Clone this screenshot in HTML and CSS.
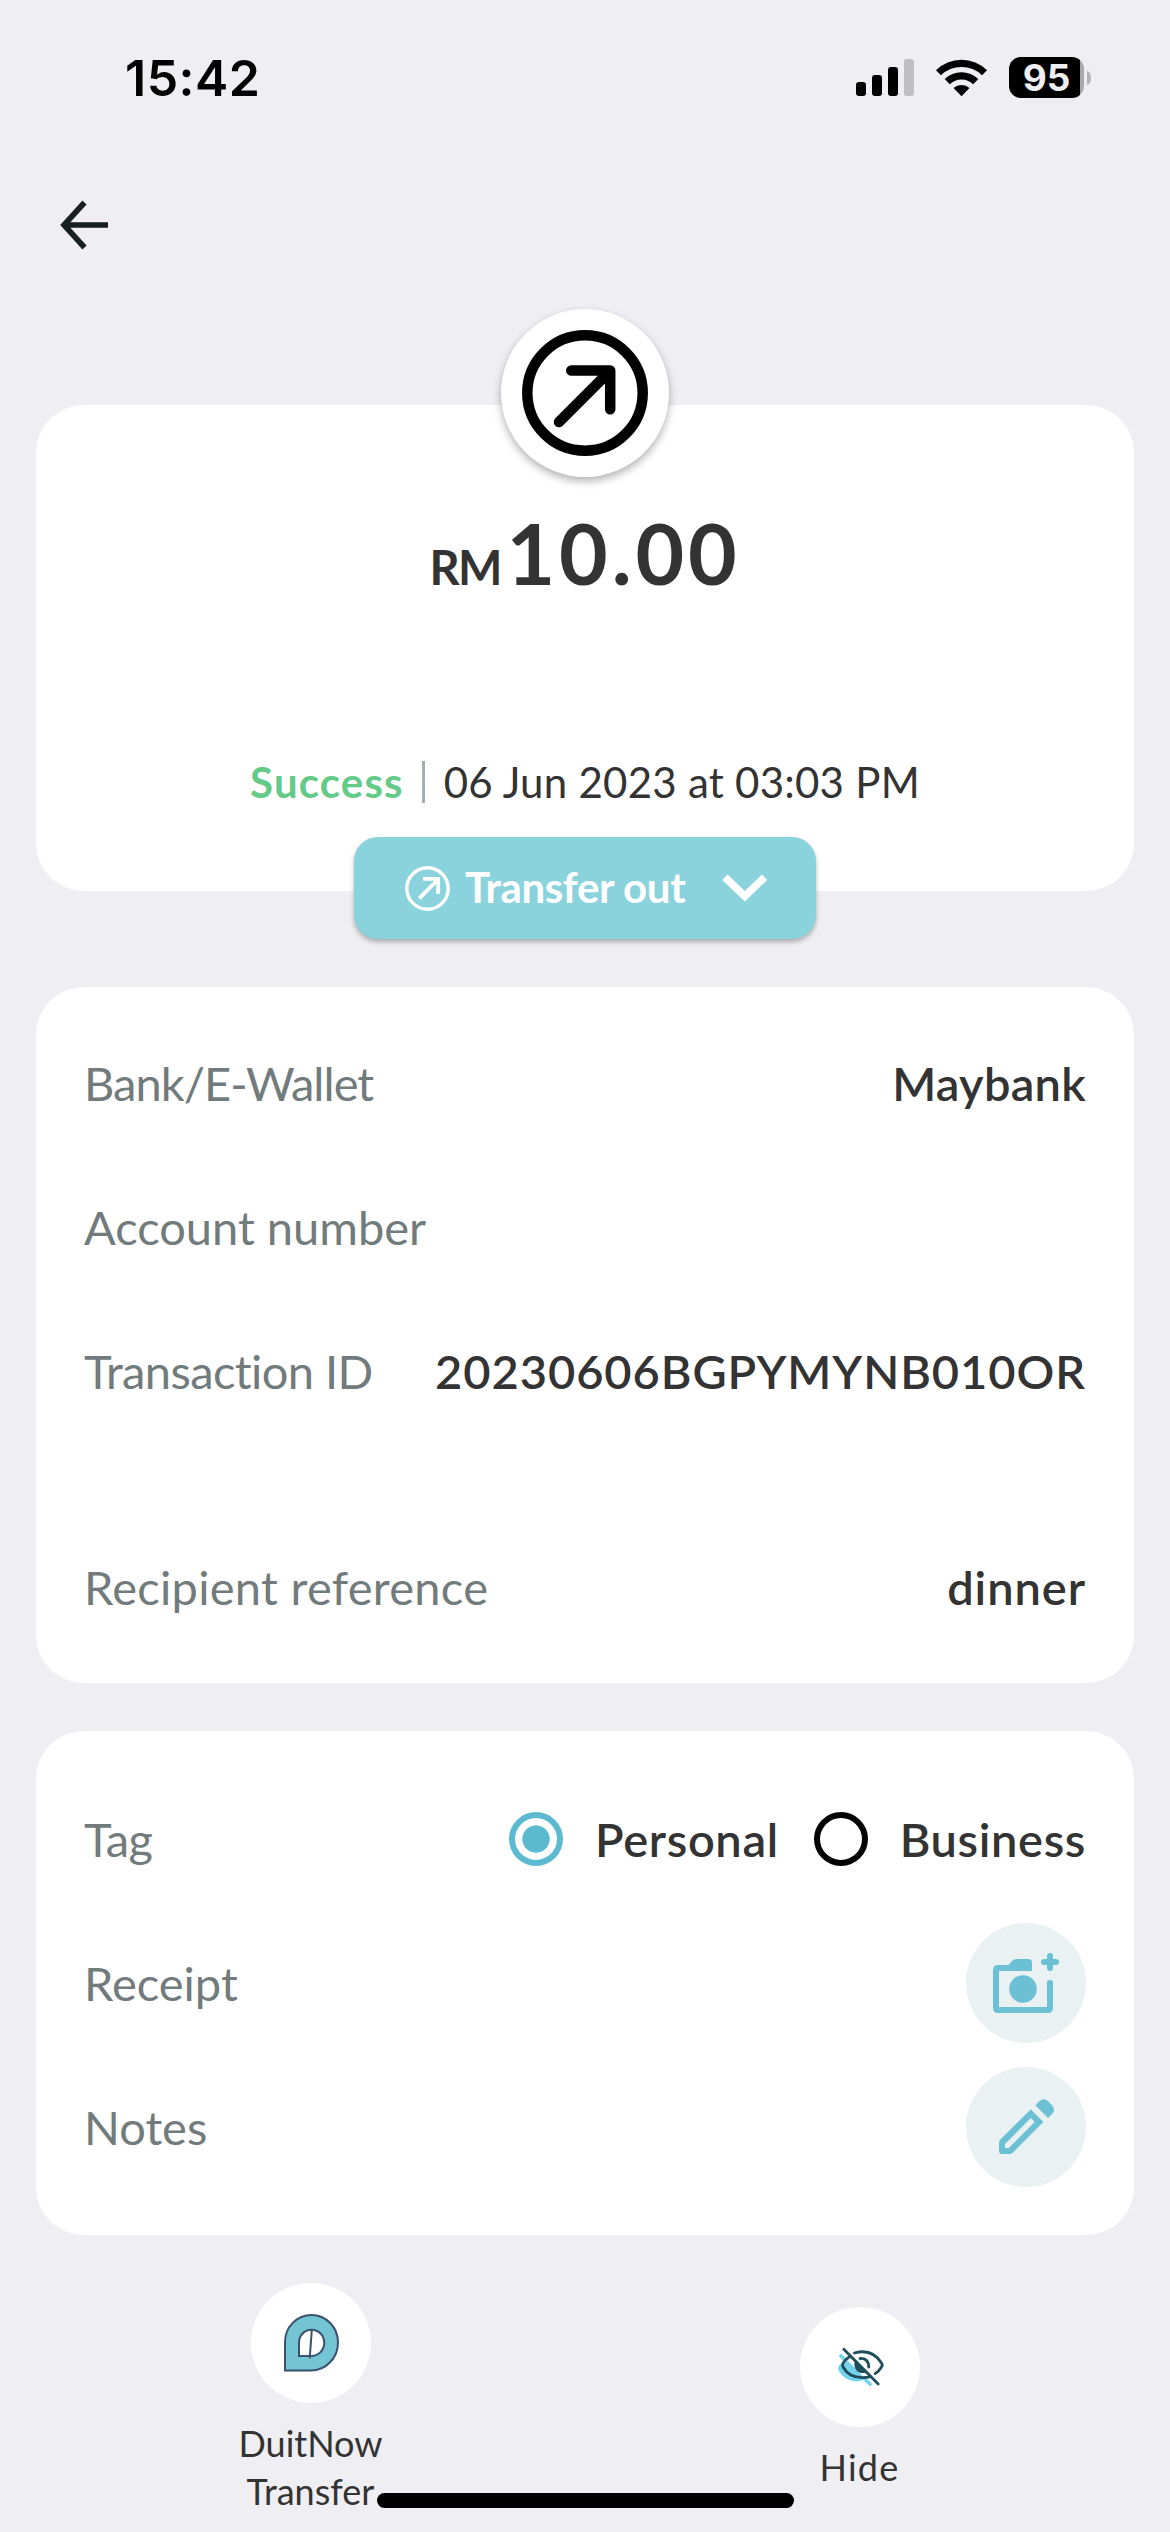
FILE: index.html
```
<!DOCTYPE html>
<html lang="en">
<head>
<meta charset="utf-8">
<title>Transaction details</title>
<link rel="stylesheet" href="styles.css">
</head>
<body>
<div class="screen">
  <header class="status-bar">
    <span class="clock">15:42</span>
    <div class="status-icons">
      <svg class="signal" width="58" height="37" viewBox="0 0 58 37">
        <rect x="0" y="23" width="10" height="14" rx="3"/>
        <rect x="16" y="16" width="10" height="21" rx="3"/>
        <rect x="32" y="8" width="10" height="29" rx="3"/>
        <rect x="48" y="0" width="10" height="37" rx="3" fill="#bfbfc2"/>
      </svg>
      <svg class="wifi" width="51" height="37" viewBox="0 0 51 37">
        <path d="M0 11.2A36.6 36.6 0 0 1 51 11.2L46 16.2A29.6 29.6 0 0 0 5 16.2Z"/>
        <path d="M8.7 20A24.2 24.2 0 0 1 42.3 20L37.2 25.2A17 17 0 0 0 13.8 25.2Z"/>
        <path d="M17.5 29A12 12 0 0 1 33.5 29L25.5 37.2Z"/>
      </svg>
      <div class="battery">
        <span class="battery-body">95</span>
        <span class="battery-tip"></span>
      </div>
    </div>
  </header>

  <nav class="top-bar">
    <svg width="50" height="50" viewBox="0 0 50 50" fill="none" stroke="#171f20" stroke-width="5.6">
      <path d="M24.5 2.5L4 25L24.5 47.5M4 25H48"/>
    </svg>
  </nav>

  <main class="content">
    <section class="card summary">
      <div class="badge">
        <svg width="126" height="126" viewBox="0 0 126 126" fill="none" stroke="#000" stroke-width="10.5" stroke-linecap="round" stroke-linejoin="round">
          <circle cx="63" cy="63" r="57.7"/>
          <path d="M37 92L88 41M49.3 40.5H88.2V79.3"/>
        </svg>
      </div>
      <p class="amount"><span class="currency">RM</span><span class="figure">10.00</span></p>
      <p class="status-line"><span class="success">Success</span><span class="divider"></span><span class="date">06 Jun 2023 at 03:03 PM</span></p>
      <div class="type-button">
        <svg width="45" height="45" viewBox="0 0 45 45" fill="none" stroke="#fff" stroke-width="3.4">
          <circle cx="22.5" cy="22.5" r="20.7"/>
          <path d="M14.3 32.3L32.5 14M18 12.8H33.2V28" stroke-width="3.8"/>
        </svg>
        <span class="type-name">Transfer out</span>
        <svg width="46" height="28" viewBox="0 0 46 28" fill="none" stroke="#fff" stroke-width="7.6">
          <path d="M3 3.2L22.8 22.2L42.6 3.2"/>
        </svg>
      </div>
    </section>

    <section class="card details">
      <div class="row"><span class="label snug">Bank/E-Wallet</span><span class="value">Maybank</span></div>
      <div class="row"><span class="label">Account number</span></div>
      <div class="row row-tall"><span class="label close">Transaction ID</span><span class="value wide">20230606BGPYMYNB010OR</span></div>
      <div class="row"><span class="label loose">Recipient reference</span><span class="value wide">dinner</span></div>
    </section>

    <section class="card extras">
      <div class="row">
        <span class="label close">Tag</span>
        <div class="choices">
          <div class="choice"><span class="radio selected"></span><span class="value option">Personal</span></div>
          <div class="choice"><span class="radio"></span><span class="value option">Business</span></div>
        </div>
      </div>
      <div class="row">
        <span class="label">Receipt</span>
        <div class="round tint">
          <svg width="120" height="120" viewBox="0 0 120 120" fill="#6bc0d3">
            <path d="M32 42H42.3L46.5 37.6Q48 36 50.5 36H62Q66 36 66 40V48H33V84H81V59.500Q81 57 84 57Q87 57 87 59.500V85Q87 90 82 90H32Q27 90 27 85V47Q27 42 32 42Z"/>
            <circle cx="57" cy="66" r="13.800"/>
            <path d="M84 33V45M78 39H90" stroke="#6bc0d3" stroke-width="6" stroke-linecap="round"/>
          </svg>
        </div>
      </div>
      <div class="row">
        <span class="label">Notes</span>
        <div class="round tint">
          <svg width="120" height="120" viewBox="0 0 120 120" fill="#6bc0d3">
            <path fill-rule="evenodd" d="M64.800 42.300L77.300 55L47 85.400Q45.200 87 43 87H36Q33 87 33 84V76.500Q33 73.500 35 71.800ZM64.800 51L39 77V81H42.800L68.700 55Z"/>
            <path d="M69.300 38.200L73 34.400Q77.600 30 82.300 34.400L86 38.200Q90 42.500 86 47L82 51Z"/>
          </svg>
        </div>
      </div>
    </section>

    <footer class="actions">
      <div class="action">
        <div class="round plain">
          <svg width="120" height="120" viewBox="0 0 120 120" stroke="#3a5270" stroke-width="2">
            <path fill="#74c5d3" d="M34 87.500V59A26.500 27 0 0 1 60.500 32A26.500 27.500 0 0 1 87 59.500A27 28 0 0 1 60 87.500Z"/>
            <path fill="#fff" d="M48 73V59.500A12.500 12.700 0 0 1 60.500 46.700A12.700 13.100 0 0 1 60.500 73Z"/>
            <path d="M60.800 47L58.700 75.500"/>
          </svg>
        </div>
        <span class="action-name">DuitNow<br>Transfer</span>
      </div>
      <div class="action">
        <div class="round plain">
          <svg width="120" height="120" viewBox="0 0 120 120" fill="none" stroke-linecap="round">
            <path fill="#74d3ec" d="M46 52Q37 59 38 62Q44 75 59 74.300L67 72Z"/>
            <path stroke="#74d3ec" stroke-width="3.400" d="M40.800 48.700L70.200 77.300"/>
            <path fill="#fff" d="M49.500 49.700Q40.500 56.500 43 60Q51 74 71.200 69.700Z"/>
            <path fill="#74d3ec" d="M46 52Q41 57 43 60Q49 70 64 70.500L52 58Z"/>
            <path stroke="#1e4e5a" stroke-width="2.800" d="M43.800 42.300L78.200 77M49.500 49.700Q40.500 56.500 43 60Q51 74 71.200 69.700M54.500 46Q72 41 81.500 56Q83 58 81.500 60Q79 64.200 75.200 66.700M60 51.500Q68.500 51 68.800 60"/>
            <path fill="#1e4e5a" d="M55 53.500L67.500 65Q62 67.500 57.500 64.500Q53 60 55 53.500Z"/>
          </svg>
        </div>
        <span class="action-name wide">Hide</span>
      </div>
    </footer>
  </main>
  <div class="home-indicator"></div>
</div>
</body>
</html>
```
FILE: styles.css
```
* { box-sizing: border-box; }
body {
  margin: 0;
  background: #efeef3;
  color: #333;
  font-family: Lato, "Open Sans", sans-serif;
}
p { margin: 0; }
svg { display: block; flex: none; }
.screen {
  position: relative;
  width: 1170px;
  height: 2532px;
  overflow: hidden;
}

.status-bar {
  display: flex;
  align-items: center;
  justify-content: space-between;
  height: 155px;
  padding: 0 79px 0 125px;
  color: #000;
}
.clock {
  font: 600 50px/60px Inter, sans-serif;
  letter-spacing: 0.5px;
}
.status-icons { display: flex; align-items: center; gap: 22px; }
.battery { display: flex; align-items: center; gap: 3px; }
.battery-body {
  width: 75px;
  height: 41px;
  border-radius: 12px;
  background: linear-gradient(90deg, #000 71px, #a9a9ac 71px);
  color: #efeef3;
  font: 700 37px/41px Inter, sans-serif;
  text-align: center;
}
.battery-tip {
  width: 4px;
  height: 14px;
  border-radius: 0 4px 4px 0 / 0 7px 7px 0;
  background: #b4b4b8;
}

.top-bar {
  display: flex;
  align-items: center;
  height: 140px;
  padding-left: 60px;
}

.content { padding: 110px 36px 0; }
.card { background: #fff; border-radius: 48px; }

.summary {
  position: relative;
  display: flex;
  flex-direction: column;
  align-items: center;
  height: 486px;
  padding-top: 98px;
}
.badge {
  position: absolute;
  top: -96px;
  left: 465px;
  display: flex;
  align-items: center;
  justify-content: center;
  width: 168px;
  height: 168px;
  border-radius: 50%;
  background: #fff;
  box-shadow: 0 4px 8px rgba(0, 0, 0, 0.3);
}
.amount {
  display: flex;
  align-items: baseline;
  gap: 6px;
  height: 100px;
  font-weight: 700;
  line-height: 100px;
}
.currency { font-size: 47px; letter-spacing: -1.8px; }
.figure { font-size: 84px; letter-spacing: 3.8px; }
.status-line {
  display: flex;
  align-items: center;
  gap: 18.5px;
  margin-top: 152px;
  font-size: 42px;
  line-height: 54px;
}
.success { color: #64ca87; font-weight: 700; letter-spacing: 1.17px; }
.divider { width: 3px; height: 42px; background: #a4afb2; }
.date { letter-spacing: 0.25px; }
.type-button {
  position: absolute;
  bottom: -48px;
  left: 318px;
  display: flex;
  align-items: center;
  width: 462px;
  height: 102px;
  padding: 0 48px 0 51px;
  border-radius: 24px;
  background: #8ad3dd;
  box-shadow: 0 3px 5px rgba(0, 0, 0, 0.28);
  color: #fff;
}
.type-name {
  flex: 1;
  padding: 0 0 2px 15px;
  font-size: 42px;
  font-weight: 700;
  letter-spacing: -0.4px;
  white-space: nowrap;
}

.details { margin-top: 96px; padding: 24px 48px; }
.extras { margin-top: 48px; padding: 36px 48px; }
.row {
  display: flex;
  align-items: center;
  justify-content: space-between;
  height: 144px;
  font-size: 47px;
  line-height: 60px;
}
.row-tall { height: 216px; padding-bottom: 72px; }
.label { color: #727b7c; }
.label.snug { letter-spacing: -0.95px; }
.label.close { letter-spacing: -0.6px; }
.label.loose { letter-spacing: 0.28px; }
.value { font-weight: 600; letter-spacing: 0.27px; }
.value.wide { letter-spacing: 0.95px; }
.value.option { letter-spacing: 0.65px; }

.choices { display: flex; gap: 35px; }
.choice { display: flex; align-items: center; gap: 32px; }
.radio {
  width: 54px;
  height: 54px;
  border: 6px solid #000;
  border-radius: 50%;
}
.radio.selected {
  border-color: #5bb9d0;
  background: radial-gradient(circle, #5bb9d0 13.3px, transparent 14px);
}

.round { width: 120px; height: 120px; border-radius: 50%; }
.tint { background: #e9f1f3; }
.plain { background: #fff; }

.actions {
  display: flex;
  align-items: center;
  margin-top: 48px;
}
.action {
  flex: 1;
  display: flex;
  flex-direction: column;
  align-items: center;
  gap: 16px;
}
.action-name {
  font-size: 36px;
  line-height: 48px;
  text-align: center;
}
.action-name.wide { letter-spacing: 1.3px; }
.home-indicator {
  position: absolute;
  bottom: 24px;
  left: 377px;
  width: 417px;
  height: 15px;
  border-radius: 8px;
  background: #000;
}
```
